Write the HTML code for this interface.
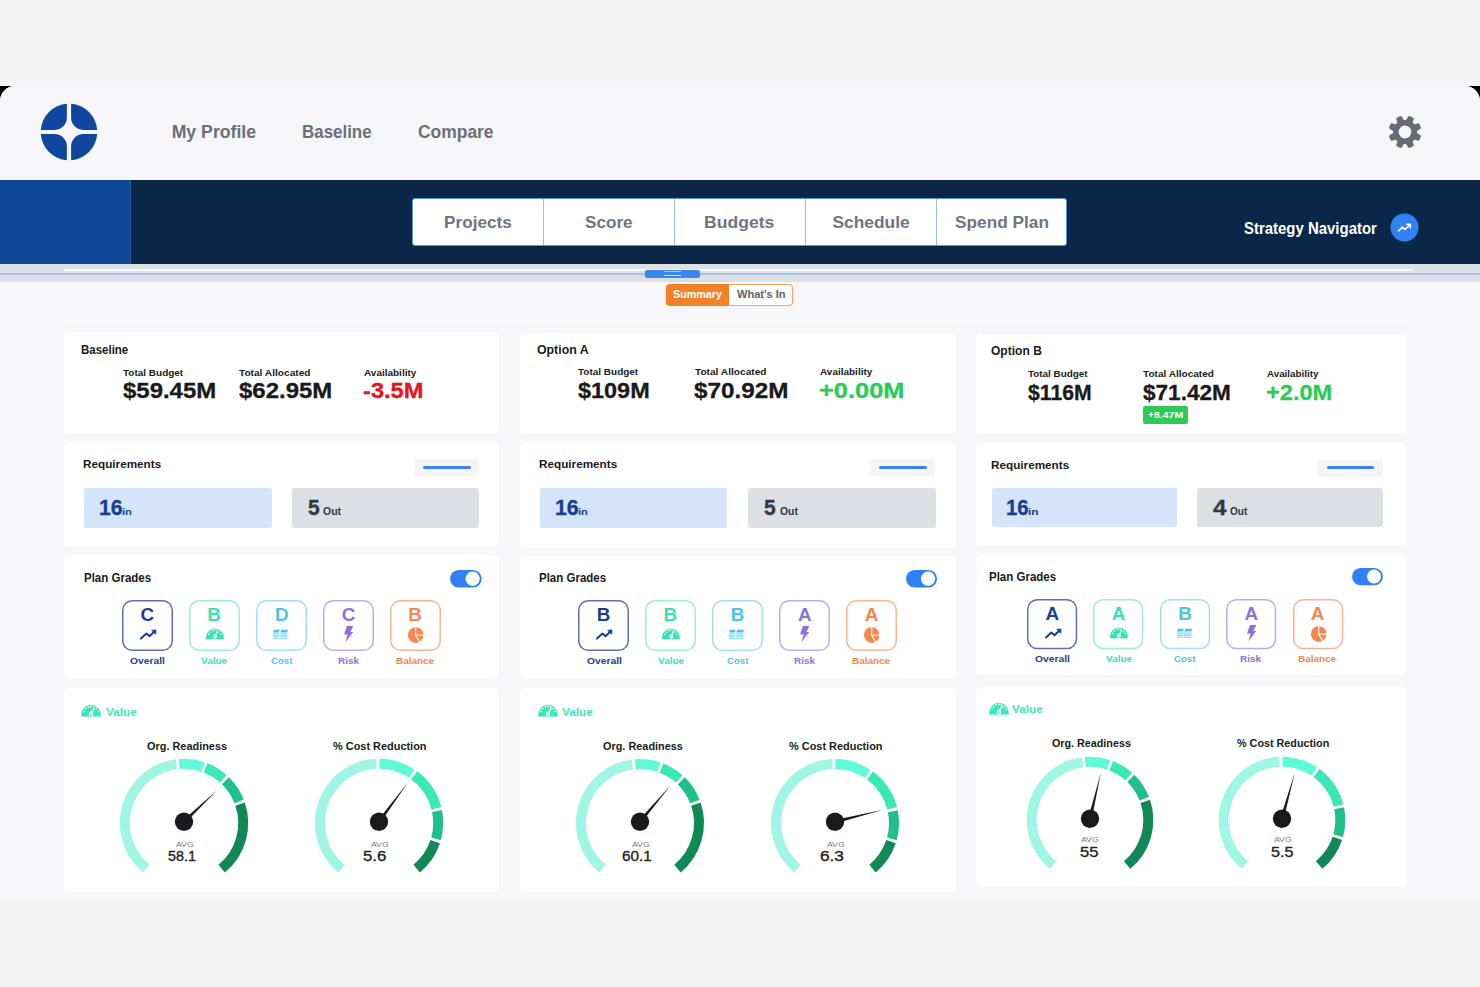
<!DOCTYPE html><html><head><meta charset="utf-8"><style>
html,body{margin:0;padding:0;}
body{width:1480px;height:987px;overflow:hidden;position:relative;background:#f4f4f4;font-family:"Liberation Sans",sans-serif;}
.t{position:absolute;white-space:nowrap;}
.r{position:absolute;display:block;}
</style></head><body>
<div class="r" style="left:0px;top:0px;width:1480px;height:86px;background:#f4f4f4;"></div>
<div class="r" style="left:0px;top:86px;width:1480px;height:24px;background:#000;"></div>
<div class="r" style="left:0px;top:86px;width:1480px;height:814px;background:#f7f7f9;border-radius:15px 15px 0 0;"></div>
<div class="r" style="left:0px;top:86px;width:1480px;height:94px;background:#f6f6f8;border-radius:15px 15px 0 0;"></div>
<svg class="r" style="left:36.75px;top:100px;" width="64" height="64" viewBox="0 0 64 64"><g transform="translate(32,32)"><path d="M2.1,-28.221977251780217 A28.3,28.3 0 0 1 28.221977251780217,-2.1 L14.299999999999999,-2.1 A12.2,12.2 0 0 1 2.1,-14.299999999999999 Z" transform="rotate(0)" fill="#0f479e"/><path d="M2.1,-28.221977251780217 A28.3,28.3 0 0 1 28.221977251780217,-2.1 L14.299999999999999,-2.1 A12.2,12.2 0 0 1 2.1,-14.299999999999999 Z" transform="rotate(90)" fill="#0f479e"/><path d="M2.1,-28.221977251780217 A28.3,28.3 0 0 1 28.221977251780217,-2.1 L14.299999999999999,-2.1 A12.2,12.2 0 0 1 2.1,-14.299999999999999 Z" transform="rotate(180)" fill="#0f479e"/><path d="M2.1,-28.221977251780217 A28.3,28.3 0 0 1 28.221977251780217,-2.1 L14.299999999999999,-2.1 A12.2,12.2 0 0 1 2.1,-14.299999999999999 Z" transform="rotate(270)" fill="#0f479e"/></g></svg>
<div class="t" id="t0" style="left:171.65px;top:124.43px;font-size:17.68px;line-height:17.68px;color:#6c6e78;font-weight:700;">My Profile</div>
<div class="t" id="t1" style="left:301.50px;top:124.43px;font-size:17.68px;line-height:17.68px;transform:scaleX(0.9577);transform-origin:0 0;color:#6c6e78;font-weight:700;">Baseline</div>
<div class="t" id="t2" style="left:418.10px;top:124.43px;font-size:17.68px;line-height:17.68px;transform:scaleX(0.9864);transform-origin:0 0;color:#6c6e78;font-weight:700;">Compare</div>
<svg class="r" style="left:1388px;top:115px;" width="34" height="34" viewBox="0 0 34 34"><g transform="translate(17,17)"><path d="M-3.4,-10 L-2.6,-15.4 Q-2.5,-16 -1.8,-16 L1.8,-16 Q2.5,-16 2.6,-15.4 L3.4,-10 Z" transform="rotate(22.5)" fill="#676a75" stroke="#676a75" stroke-width="0.8" stroke-linejoin="round"/><path d="M-3.4,-10 L-2.6,-15.4 Q-2.5,-16 -1.8,-16 L1.8,-16 Q2.5,-16 2.6,-15.4 L3.4,-10 Z" transform="rotate(67.5)" fill="#676a75" stroke="#676a75" stroke-width="0.8" stroke-linejoin="round"/><path d="M-3.4,-10 L-2.6,-15.4 Q-2.5,-16 -1.8,-16 L1.8,-16 Q2.5,-16 2.6,-15.4 L3.4,-10 Z" transform="rotate(112.5)" fill="#676a75" stroke="#676a75" stroke-width="0.8" stroke-linejoin="round"/><path d="M-3.4,-10 L-2.6,-15.4 Q-2.5,-16 -1.8,-16 L1.8,-16 Q2.5,-16 2.6,-15.4 L3.4,-10 Z" transform="rotate(157.5)" fill="#676a75" stroke="#676a75" stroke-width="0.8" stroke-linejoin="round"/><path d="M-3.4,-10 L-2.6,-15.4 Q-2.5,-16 -1.8,-16 L1.8,-16 Q2.5,-16 2.6,-15.4 L3.4,-10 Z" transform="rotate(202.5)" fill="#676a75" stroke="#676a75" stroke-width="0.8" stroke-linejoin="round"/><path d="M-3.4,-10 L-2.6,-15.4 Q-2.5,-16 -1.8,-16 L1.8,-16 Q2.5,-16 2.6,-15.4 L3.4,-10 Z" transform="rotate(247.5)" fill="#676a75" stroke="#676a75" stroke-width="0.8" stroke-linejoin="round"/><path d="M-3.4,-10 L-2.6,-15.4 Q-2.5,-16 -1.8,-16 L1.8,-16 Q2.5,-16 2.6,-15.4 L3.4,-10 Z" transform="rotate(292.5)" fill="#676a75" stroke="#676a75" stroke-width="0.8" stroke-linejoin="round"/><path d="M-3.4,-10 L-2.6,-15.4 Q-2.5,-16 -1.8,-16 L1.8,-16 Q2.5,-16 2.6,-15.4 L3.4,-10 Z" transform="rotate(337.5)" fill="#676a75" stroke="#676a75" stroke-width="0.8" stroke-linejoin="round"/><circle r="12" fill="#676a75"/><circle r="6.4" fill="#f6f6f8"/></g></svg>
<div class="r" style="left:0px;top:180px;width:1480px;height:84px;background:#0b2747;"></div>
<div class="r" style="left:0px;top:180px;width:130px;height:84px;background:#0e4596;"></div>
<div class="r" style="left:130px;top:180px;width:1px;height:84px;background:#2a5c9e;"></div>
<div class="r" style="left:412px;top:198px;width:655px;height:48px;background:#ffffff;border:1px solid #5d92e0;box-sizing:border-box;border-radius:3px;"></div>
<div class="r" style="left:543px;top:199px;width:1px;height:46px;background:#9cbcea;"></div>
<div class="r" style="left:674px;top:199px;width:1px;height:46px;background:#9cbcea;"></div>
<div class="r" style="left:805px;top:199px;width:1px;height:46px;background:#9cbcea;"></div>
<div class="r" style="left:936px;top:199px;width:1px;height:46px;background:#9cbcea;"></div>
<div class="t" id="t3" style="left:443.88px;top:214.28px;font-size:17.39px;line-height:17.39px;transform:scaleX(0.9883);transform-origin:0 0;color:#72747d;font-weight:700;">Projects</div>
<div class="t" id="t4" style="left:584.99px;top:214.28px;font-size:17.39px;line-height:17.39px;transform:scaleX(0.9848);transform-origin:0 0;color:#72747d;font-weight:700;">Score</div>
<div class="t" id="t5" style="left:704.36px;top:214.28px;font-size:17.39px;line-height:17.39px;transform:scaleX(1.0112);transform-origin:0 0;color:#72747d;font-weight:700;">Budgets</div>
<div class="t" id="t6" style="left:832.48px;top:214.28px;font-size:17.39px;line-height:17.39px;color:#72747d;font-weight:700;">Schedule</div>
<div class="t" id="t7" style="left:954.98px;top:214.28px;font-size:17.39px;line-height:17.39px;transform:scaleX(0.9932);transform-origin:0 0;color:#72747d;font-weight:700;">Spend Plan</div>
<div class="t" id="t8" style="left:1244.25px;top:220.71px;font-size:15.94px;line-height:15.94px;transform:scaleX(0.9377);transform-origin:0 0;color:#ffffff;font-weight:700;">Strategy Navigator</div>
<svg class="r" style="left:1390px;top:213px;" width="29" height="29" viewBox="0 0 29 29"><circle cx="14.5" cy="14.5" r="14" fill="#3282f5"/><polyline points="8.5,18 12.5,14 15,16.5 20,11.5" fill="none" stroke="#fff" stroke-width="1.6" stroke-linejoin="round" stroke-linecap="round"/><polyline points="16.8,11.2 20.3,11.2 20.3,14.7" fill="none" stroke="#fff" stroke-width="1.6" stroke-linejoin="round" stroke-linecap="round"/></svg>
<div class="r" style="left:0px;top:264px;width:1480px;height:18px;background:#dde0e4;"></div>
<div class="r" style="left:64px;top:269px;width:1349px;height:2px;background:#f7f8fa;"></div>
<div class="r" style="left:0px;top:273px;width:1480px;height:2px;background:#a9c0e4;"></div>
<div class="r" style="left:645px;top:270px;width:55px;height:8px;background:#3a87f4;border-radius:2px;"></div>
<div class="r" style="left:664px;top:271px;width:17px;height:1px;background:#a9ccfb;"></div>
<div class="r" style="left:664px;top:275px;width:17px;height:1px;background:#cfe2fd;"></div>
<div class="r" style="left:666px;top:284px;width:64px;height:22px;background:#f58126;border-radius:4px 0 0 4px;"></div>
<div class="r" style="left:729px;top:284px;width:64px;height:22px;background:#ffffff;border:1px solid #f5a46a;border-left:none;box-sizing:border-box;border-radius:0 4px 4px 0;"></div>
<div class="t" id="t9" style="left:673.18px;top:289.67px;font-size:10.43px;line-height:10.43px;transform:scaleX(1.0283);transform-origin:0 0;color:#ffffff;font-weight:700;">Summary</div>
<div class="t" id="t10" style="left:737.00px;top:289.67px;font-size:10.43px;line-height:10.43px;transform:scaleX(1.0587);transform-origin:0 0;color:#5d5f69;font-weight:700;">What's In</div>
<div class="r" style="left:58px;top:320px;width:1355px;height:2px;background:#fbfbfc;"></div>
<div class="r" style="left:64px;top:332px;width:435px;height:102px;background:#ffffff;border-radius:5px;"></div>
<div class="r" style="left:64px;top:442px;width:435px;height:105px;background:#ffffff;border-radius:5px;"></div>
<div class="r" style="left:64px;top:555px;width:435px;height:124px;background:#ffffff;border-radius:5px;"></div>
<div class="r" style="left:64px;top:688px;width:435px;height:204px;background:#ffffff;border-radius:5px;"></div>
<div class="r" style="left:520px;top:333px;width:436px;height:101px;background:#ffffff;border-radius:5px;"></div>
<div class="r" style="left:520px;top:442px;width:436px;height:106px;background:#ffffff;border-radius:5px;"></div>
<div class="r" style="left:520px;top:556px;width:436px;height:123px;background:#ffffff;border-radius:5px;"></div>
<div class="r" style="left:520px;top:688px;width:436px;height:204px;background:#ffffff;border-radius:5px;"></div>
<div class="r" style="left:976px;top:334px;width:430px;height:100px;background:#ffffff;border-radius:5px;"></div>
<div class="r" style="left:976px;top:443px;width:430px;height:103px;background:#ffffff;border-radius:5px;"></div>
<div class="r" style="left:976px;top:554px;width:430px;height:121px;background:#ffffff;border-radius:5px;"></div>
<div class="r" style="left:976px;top:687px;width:430px;height:200px;background:#ffffff;border-radius:5px;"></div>
<!--CONTENT-->
<div class="t" id="t11" style="left:80.95px;top:343.89px;font-size:12.17px;line-height:12.17px;transform:scaleX(0.9443);transform-origin:0 0;color:#1a1a1a;font-weight:700;">Baseline</div>
<div class="t" id="t12" style="left:122.90px;top:368.40px;font-size:9.57px;line-height:9.57px;transform:scaleX(1.0428);transform-origin:0 0;color:#1a1a1a;font-weight:700;">Total Budget</div>
<div class="t" id="t13" style="left:239.20px;top:368.40px;font-size:9.57px;line-height:9.57px;transform:scaleX(1.0589);transform-origin:0 0;color:#1a1a1a;font-weight:700;">Total Allocated</div>
<div class="t" id="t14" style="left:363.95px;top:368.40px;font-size:9.57px;line-height:9.57px;transform:scaleX(1.0434);transform-origin:0 0;color:#1a1a1a;font-weight:700;">Availability</div>
<div class="t" id="t15" style="left:122.64px;top:381.04px;font-size:21.45px;line-height:21.45px;transform:scaleX(1.1172);transform-origin:0 0;color:#1a1a1a;font-weight:700;-webkit-text-stroke:0.3px #1a1a1a;">$59.45M</div>
<div class="t" id="t16" style="left:238.94px;top:381.04px;font-size:21.45px;line-height:21.45px;transform:scaleX(1.1184);transform-origin:0 0;color:#1a1a1a;font-weight:700;-webkit-text-stroke:0.3px #1a1a1a;">$62.95M</div>
<div class="t" id="t17" style="left:363.25px;top:381.04px;font-size:21.45px;line-height:21.45px;transform:scaleX(1.1037);transform-origin:0 0;color:#e3141b;font-weight:700;-webkit-text-stroke:0.3px #e3141b;">-3.5M</div>
<div class="t" id="t18" style="left:83.34px;top:460.27px;font-size:10.43px;line-height:10.43px;transform:scaleX(1.1249);transform-origin:0 0;color:#1a1a1a;font-weight:700;">Requirements</div>
<div class="r" style="left:414.6px;top:459px;width:64.69999999999999px;height:17px;background:#f5f5f7;border-radius:3px;"></div>
<div class="r" style="left:423px;top:466.2px;width:47.80000000000001px;height:3.0px;background:#3b82f6;border-radius:2px;"></div>
<div class="r" style="left:84px;top:487.7px;width:188px;height:39.900000000000034px;background:#d3e4fb;border-radius:3px;"></div>
<div class="r" style="left:292px;top:487.7px;width:187.3px;height:39.900000000000034px;background:#dcdfe4;border-radius:3px;"></div>
<div class="t" id="t19" style="left:99.23px;top:498.24px;font-size:21.45px;line-height:21.45px;transform:scaleX(0.9876);transform-origin:0 0;color:#143f8e;font-weight:700;-webkit-text-stroke:0.3px #143f8e;">16</div>
<div class="t" id="t20" style="left:122.22px;top:507.25px;font-size:9.63px;line-height:9.63px;transform:scaleX(1.1614);transform-origin:0 0;color:#143f8e;font-weight:700;">in</div>
<div class="t" id="t21" style="left:308.17px;top:498.24px;font-size:21.45px;line-height:21.45px;transform:scaleX(0.9791);transform-origin:0 0;color:#333842;font-weight:700;-webkit-text-stroke:0.3px #333842;">5</div>
<div class="t" id="t22" style="left:323.28px;top:506.81px;font-size:10.14px;line-height:10.14px;transform:scaleX(1.0329);transform-origin:0 0;color:#333842;font-weight:700;">Out</div>
<div class="t" id="t23" style="left:83.55px;top:571.85px;font-size:12.46px;line-height:12.46px;transform:scaleX(0.9241);transform-origin:0 0;color:#1a1a1a;font-weight:700;">Plan Grades</div>
<svg class="r" style="left:449.5px;top:569.7px;" width="33" height="19" viewBox="0 0 33 19"><rect x="0" y="0" width="31.70" height="17.50" rx="8.75" fill="#3181f6"/><circle cx="22.65" cy="8.75" r="7.15" fill="#fff"/></svg>
<svg class="r" style="left:122px;top:600.2px;" width="51" height="51" viewBox="0 0 51 51"><rect x="0.75" y="0.75" width="49.50" height="49.50" rx="9.5" fill="#fff" stroke="#6070ad" stroke-width="1.5"/><polyline points="19,38.6 24.4,33.5 27.5,36.2 31.6,32.2" fill="none" stroke="#1f3e8a" stroke-width="2" stroke-linejoin="round" stroke-linecap="round"/><polygon points="34.1,29.9 29.6,30.2 33.8,34.4" fill="#1f3e8a" stroke="#1f3e8a" stroke-width="0.6" stroke-linejoin="round"/></svg>
<div class="t" id="t24" style="left:140.58px;top:606.45px;font-size:18.84px;line-height:18.84px;color:#1f3e8a;font-weight:700;">C</div>
<div class="t" id="t25" style="left:130.19px;top:657.12px;font-size:8.84px;line-height:8.84px;transform:scaleX(1.1639);transform-origin:0 0;color:#1f3e8a;font-weight:700;">Overall</div>
<svg class="r" style="left:188.8px;top:600.2px;" width="51" height="51" viewBox="0 0 51 51"><rect x="0.75" y="0.75" width="49.50" height="49.50" rx="9.5" fill="#fff" stroke="#9ceed6" stroke-width="1.5"/><path d="M17.10,39.20 L17.10,37.20 A8.80,8.80 0 0 1 34.70,37.20 L34.70,39.20 Z" fill="#35e4b2"/><circle cx="19.70" cy="34.34" r="0.79" fill="#ffffff" opacity="0.9"/><circle cx="21.23" cy="31.93" r="0.79" fill="#ffffff" opacity="0.9"/><circle cx="23.64" cy="30.40" r="0.79" fill="#ffffff" opacity="0.9"/><circle cx="25.90" cy="30.00" r="0.79" fill="#ffffff" opacity="0.9"/><circle cx="28.16" cy="30.40" r="0.79" fill="#ffffff" opacity="0.9"/><circle cx="30.57" cy="31.93" r="0.79" fill="#ffffff" opacity="0.9"/><circle cx="32.10" cy="34.34" r="0.79" fill="#ffffff" opacity="0.9"/><line x1="25.90" y1="36.60" x2="28.39" y2="31.92" stroke="#ffffff" stroke-width="1.41" stroke-linecap="round"/><circle cx="25.90" cy="36.60" r="1.58" fill="none" stroke="#ffffff" stroke-width="1.06"/></svg>
<div class="t" id="t26" style="left:207.33px;top:606.45px;font-size:18.84px;line-height:18.84px;color:#35e4b2;font-weight:700;">B</div>
<div class="t" id="t27" style="left:201.35px;top:657.12px;font-size:8.84px;line-height:8.84px;transform:scaleX(1.1355);transform-origin:0 0;color:#35e4b2;font-weight:700;">Value</div>
<svg class="r" style="left:256.4px;top:600.2px;" width="51" height="51" viewBox="0 0 51 51"><rect x="0.75" y="0.75" width="49.50" height="49.50" rx="9.5" fill="#fff" stroke="#a4dff2" stroke-width="1.5"/><path d="M16.900000000000002,33.2 L23.4,33.2 L23.1,34.800000000000004 L16.6,34.800000000000004 Z" fill="#4cc3e8" opacity="0.55"/><path d="M16.900000000000002,35.300000000000004 L23.4,35.300000000000004 L23.1,36.900000000000006 L16.6,36.900000000000006 Z" fill="#4cc3e8" opacity="0.55"/><path d="M16.900000000000002,37.400000000000006 L23.4,37.400000000000006 L23.1,39.00000000000001 L16.6,39.00000000000001 Z" fill="#4cc3e8" opacity="0.55"/><path d="M18.200000000000003,29.8 L24.0,29.8 L22.6,32.6 L16.8,32.6 Z" fill="#4cc3e8"/><path d="M24.2,33.2 L31.699999999999996,33.2 L31.4,34.800000000000004 L23.9,34.800000000000004 Z" fill="#4cc3e8" opacity="0.55"/><path d="M24.2,35.300000000000004 L31.699999999999996,35.300000000000004 L31.4,36.900000000000006 L23.9,36.900000000000006 Z" fill="#4cc3e8" opacity="0.55"/><path d="M24.2,37.400000000000006 L31.699999999999996,37.400000000000006 L31.4,39.00000000000001 L23.9,39.00000000000001 Z" fill="#4cc3e8" opacity="0.55"/><path d="M25.5,29.8 L32.3,29.8 L30.9,32.6 L24.099999999999998,32.6 Z" fill="#4cc3e8"/></svg>
<div class="t" id="t28" style="left:274.88px;top:606.45px;font-size:18.84px;line-height:18.84px;color:#4cc3e8;font-weight:700;">D</div>
<div class="t" id="t29" style="left:271.06px;top:657.12px;font-size:8.84px;line-height:8.84px;transform:scaleX(1.0894);transform-origin:0 0;color:#4cc3e8;font-weight:700;">Cost</div>
<svg class="r" style="left:323.1px;top:600.2px;" width="51" height="51" viewBox="0 0 51 51"><rect x="0.75" y="0.75" width="49.50" height="49.50" rx="9.5" fill="#fff" stroke="#bdaeeb" stroke-width="1.5"/><polygon points="23.9,25.9 30.3,25.9 27.4,32 30.2,32 22.3,42.4 24.7,34.6 21.1,34.6" fill="#8a72dc"/></svg>
<div class="t" id="t30" style="left:341.68px;top:606.45px;font-size:18.84px;line-height:18.84px;color:#8a72dc;font-weight:700;">C</div>
<div class="t" id="t31" style="left:337.80px;top:657.12px;font-size:8.84px;line-height:8.84px;transform:scaleX(1.1229);transform-origin:0 0;color:#8a72dc;font-weight:700;">Risk</div>
<svg class="r" style="left:389.8px;top:600.2px;" width="51" height="51" viewBox="0 0 51 51"><rect x="0.75" y="0.75" width="49.50" height="49.50" rx="9.5" fill="#fff" stroke="#f4b797" stroke-width="1.5"/><circle cx="25.7" cy="35.1" r="7.8" fill="#f4874c"/><line x1="25.7" y1="35.1" x2="25.7" y2="26.3" stroke="#fff" stroke-width="1.1"/><line x1="25.7" y1="35.1" x2="34.5" y2="35.1" stroke="#fff" stroke-width="1.1"/><line x1="25.7" y1="35.1" x2="30.10" y2="42.72" stroke="#fff" stroke-width="1.1"/></svg>
<div class="t" id="t32" style="left:408.33px;top:606.45px;font-size:18.84px;line-height:18.84px;color:#f4874c;font-weight:700;">B</div>
<div class="t" id="t33" style="left:396.05px;top:657.12px;font-size:8.84px;line-height:8.84px;transform:scaleX(1.1266);transform-origin:0 0;color:#f4874c;font-weight:700;">Balance</div>
<svg class="r" style="left:81px;top:696.8px;" width="21" height="20" viewBox="0 0 21 20"><path d="M0.30,19.50 L0.30,17.50 A9.70,9.70 0 0 1 19.70,17.50 L19.70,19.50 Z" fill="#36eab6"/><circle cx="2.95" cy="14.33" r="0.87" fill="#ffffff" opacity="0.9"/><circle cx="4.70" cy="11.60" r="0.87" fill="#ffffff" opacity="0.9"/><circle cx="7.43" cy="9.85" r="0.87" fill="#ffffff" opacity="0.9"/><circle cx="10.00" cy="9.40" r="0.87" fill="#ffffff" opacity="0.9"/><circle cx="12.57" cy="9.85" r="0.87" fill="#ffffff" opacity="0.9"/><circle cx="15.30" cy="11.60" r="0.87" fill="#ffffff" opacity="0.9"/><circle cx="17.05" cy="14.33" r="0.87" fill="#ffffff" opacity="0.9"/><line x1="10.00" y1="16.90" x2="12.91" y2="11.43" stroke="#ffffff" stroke-width="1.55" stroke-linecap="round"/><circle cx="10.00" cy="16.90" r="1.75" fill="none" stroke="#ffffff" stroke-width="1.16"/></svg>
<div class="t" id="t34" style="left:106.44px;top:707.09px;font-size:11.59px;line-height:11.59px;transform:scaleX(1.0135);transform-origin:0 0;color:#3ae9b7;font-weight:700;">Value</div>
<div class="t" id="t35" style="left:147.46px;top:741.09px;font-size:11.59px;line-height:11.59px;transform:scaleX(0.9427);transform-origin:0 0;color:#1a1a1a;font-weight:700;">Org. Readiness</div>
<div class="t" id="t36" style="left:333.33px;top:741.09px;font-size:11.59px;line-height:11.59px;transform:scaleX(0.9440);transform-origin:0 0;color:#1a1a1a;font-weight:700;">% Cost Reduction</div>
<svg class="r" style="left:104.2px;top:743px;" width="160" height="150" viewBox="0 0 160 150"><path d="M42.34,125.68 A59.2,59.2 0 0 1 72.38,21.29" fill="none" stroke="#9ff6e4" stroke-width="10"/><path d="M75.25,20.99 A59.2,59.2 0 0 1 98.88,23.89" fill="none" stroke="#5ffbd8" stroke-width="10"/><path d="M101.60,24.88 A59.2,59.2 0 0 1 119.30,35.73" fill="none" stroke="#3ae8b4" stroke-width="10"/><path d="M121.42,37.70 A59.2,59.2 0 0 1 135.12,58.40" fill="none" stroke="#1fc08c" stroke-width="10"/><path d="M136.11,61.12 A59.2,59.2 0 0 1 117.66,125.68" fill="none" stroke="#128758" stroke-width="10"/><polygon points="78.76,77.40 113.31,46.98 81.24,80.00" fill="#1a1a1c"/><circle cx="80" cy="78.7" r="9.2" fill="#1a1a1c"/></svg>
<div class="t" id="t37" style="left:175.70px;top:841.30px;font-size:7.68px;line-height:7.68px;transform:scaleX(1.1263);transform-origin:0 0;color:#7a7a7e;font-weight:400;">AVG</div>
<div class="t" id="t38" style="left:168.03px;top:849.03px;font-size:14.49px;line-height:14.49px;transform:scaleX(0.9905);transform-origin:0 0;color:#232325;font-weight:400;-webkit-text-stroke:0.35px #232325;">58.1</div>
<svg class="r" style="left:299.1px;top:743px;" width="160" height="150" viewBox="0 0 160 150"><path d="M42.34,125.68 A59.2,59.2 0 0 1 77.52,20.85" fill="none" stroke="#9ff6e4" stroke-width="10"/><path d="M80.41,20.80 A59.2,59.2 0 0 1 112.76,30.69" fill="none" stroke="#5ffbd8" stroke-width="10"/><path d="M115.13,32.35 A59.2,59.2 0 0 1 137.34,65.28" fill="none" stroke="#3ae8b4" stroke-width="10"/><path d="M137.99,68.10 A59.2,59.2 0 0 1 137.02,95.92" fill="none" stroke="#1fc08c" stroke-width="10"/><path d="M136.17,98.69 A59.2,59.2 0 0 1 117.66,125.68" fill="none" stroke="#128758" stroke-width="10"/><polygon points="78.55,77.63 109.01,39.21 81.45,79.77" fill="#1a1a1c"/><circle cx="80" cy="78.7" r="9.2" fill="#1a1a1c"/></svg>
<div class="t" id="t39" style="left:370.60px;top:841.30px;font-size:7.68px;line-height:7.68px;transform:scaleX(1.1263);transform-origin:0 0;color:#7a7a7e;font-weight:400;">AVG</div>
<div class="t" id="t40" style="left:362.93px;top:849.03px;font-size:14.49px;line-height:14.49px;transform:scaleX(1.1588);transform-origin:0 0;color:#232325;font-weight:400;-webkit-text-stroke:0.35px #232325;">5.6</div>
<div class="t" id="t41" style="left:536.51px;top:343.89px;font-size:12.17px;line-height:12.17px;transform:scaleX(1.0141);transform-origin:0 0;color:#1a1a1a;font-weight:700;">Option A</div>
<div class="t" id="t42" style="left:578.20px;top:367.20px;font-size:9.57px;line-height:9.57px;transform:scaleX(1.0428);transform-origin:0 0;color:#1a1a1a;font-weight:700;">Total Budget</div>
<div class="t" id="t43" style="left:694.70px;top:367.20px;font-size:9.57px;line-height:9.57px;transform:scaleX(1.0589);transform-origin:0 0;color:#1a1a1a;font-weight:700;">Total Allocated</div>
<div class="t" id="t44" style="left:820.05px;top:367.20px;font-size:9.57px;line-height:9.57px;transform:scaleX(1.0434);transform-origin:0 0;color:#1a1a1a;font-weight:700;">Availability</div>
<div class="t" id="t45" style="left:577.95px;top:381.14px;font-size:21.45px;line-height:21.45px;transform:scaleX(1.0938);transform-origin:0 0;color:#1a1a1a;font-weight:700;-webkit-text-stroke:0.3px #1a1a1a;">$109M</div>
<div class="t" id="t46" style="left:694.44px;top:381.14px;font-size:21.45px;line-height:21.45px;transform:scaleX(1.1307);transform-origin:0 0;color:#1a1a1a;font-weight:700;-webkit-text-stroke:0.3px #1a1a1a;">$70.92M</div>
<div class="t" id="t47" style="left:819.28px;top:381.14px;font-size:21.45px;line-height:21.45px;transform:scaleX(1.1860);transform-origin:0 0;color:#2dcb55;font-weight:700;-webkit-text-stroke:0.3px #2dcb55;">+0.00M</div>
<div class="t" id="t48" style="left:539.44px;top:460.27px;font-size:10.43px;line-height:10.43px;transform:scaleX(1.1249);transform-origin:0 0;color:#1a1a1a;font-weight:700;">Requirements</div>
<div class="r" style="left:869.8px;top:459px;width:65.70000000000005px;height:17px;background:#f5f5f7;border-radius:3px;"></div>
<div class="r" style="left:879px;top:466.2px;width:48px;height:3.0px;background:#3b82f6;border-radius:2px;"></div>
<div class="r" style="left:540.2px;top:487.7px;width:187.29999999999995px;height:39.900000000000034px;background:#d3e4fb;border-radius:3px;"></div>
<div class="r" style="left:747.5px;top:487.7px;width:188.0px;height:39.900000000000034px;background:#dcdfe4;border-radius:3px;"></div>
<div class="t" id="t49" style="left:554.72px;top:498.24px;font-size:21.45px;line-height:21.45px;transform:scaleX(0.9921);transform-origin:0 0;color:#143f8e;font-weight:700;-webkit-text-stroke:0.3px #143f8e;">16</div>
<div class="t" id="t50" style="left:577.83px;top:507.25px;font-size:9.63px;line-height:9.63px;transform:scaleX(1.1478);transform-origin:0 0;color:#143f8e;font-weight:700;">in</div>
<div class="t" id="t51" style="left:764.07px;top:498.24px;font-size:21.45px;line-height:21.45px;transform:scaleX(0.9791);transform-origin:0 0;color:#333842;font-weight:700;-webkit-text-stroke:0.3px #333842;">5</div>
<div class="t" id="t52" style="left:779.58px;top:506.81px;font-size:10.14px;line-height:10.14px;transform:scaleX(1.0270);transform-origin:0 0;color:#333842;font-weight:700;">Out</div>
<div class="t" id="t53" style="left:539.45px;top:571.85px;font-size:12.46px;line-height:12.46px;transform:scaleX(0.9241);transform-origin:0 0;color:#1a1a1a;font-weight:700;">Plan Grades</div>
<svg class="r" style="left:906px;top:569.7px;" width="33" height="19" viewBox="0 0 33 19"><rect x="0" y="0" width="31.10" height="17.50" rx="8.75" fill="#3181f6"/><circle cx="22.05" cy="8.75" r="7.15" fill="#fff"/></svg>
<svg class="r" style="left:578.3px;top:600.2px;" width="51" height="51" viewBox="0 0 51 51"><rect x="0.75" y="0.75" width="49.50" height="49.50" rx="9.5" fill="#fff" stroke="#6070ad" stroke-width="1.5"/><polyline points="19,38.6 24.4,33.5 27.5,36.2 31.6,32.2" fill="none" stroke="#1f3e8a" stroke-width="2" stroke-linejoin="round" stroke-linecap="round"/><polygon points="34.1,29.9 29.6,30.2 33.8,34.4" fill="#1f3e8a" stroke="#1f3e8a" stroke-width="0.6" stroke-linejoin="round"/></svg>
<div class="t" id="t54" style="left:596.83px;top:606.45px;font-size:18.84px;line-height:18.84px;color:#1f3e8a;font-weight:700;">B</div>
<div class="t" id="t55" style="left:587.49px;top:657.12px;font-size:8.84px;line-height:8.84px;transform:scaleX(1.1639);transform-origin:0 0;color:#1f3e8a;font-weight:700;">Overall</div>
<svg class="r" style="left:645px;top:600.2px;" width="51" height="51" viewBox="0 0 51 51"><rect x="0.75" y="0.75" width="49.50" height="49.50" rx="9.5" fill="#fff" stroke="#9ceed6" stroke-width="1.5"/><path d="M17.10,39.20 L17.10,37.20 A8.80,8.80 0 0 1 34.70,37.20 L34.70,39.20 Z" fill="#35e4b2"/><circle cx="19.70" cy="34.34" r="0.79" fill="#ffffff" opacity="0.9"/><circle cx="21.23" cy="31.93" r="0.79" fill="#ffffff" opacity="0.9"/><circle cx="23.64" cy="30.40" r="0.79" fill="#ffffff" opacity="0.9"/><circle cx="25.90" cy="30.00" r="0.79" fill="#ffffff" opacity="0.9"/><circle cx="28.16" cy="30.40" r="0.79" fill="#ffffff" opacity="0.9"/><circle cx="30.57" cy="31.93" r="0.79" fill="#ffffff" opacity="0.9"/><circle cx="32.10" cy="34.34" r="0.79" fill="#ffffff" opacity="0.9"/><line x1="25.90" y1="36.60" x2="28.39" y2="31.92" stroke="#ffffff" stroke-width="1.41" stroke-linecap="round"/><circle cx="25.90" cy="36.60" r="1.58" fill="none" stroke="#ffffff" stroke-width="1.06"/></svg>
<div class="t" id="t56" style="left:663.53px;top:606.45px;font-size:18.84px;line-height:18.84px;color:#35e4b2;font-weight:700;">B</div>
<div class="t" id="t57" style="left:657.55px;top:657.12px;font-size:8.84px;line-height:8.84px;transform:scaleX(1.1355);transform-origin:0 0;color:#35e4b2;font-weight:700;">Value</div>
<svg class="r" style="left:712.3px;top:600.2px;" width="51" height="51" viewBox="0 0 51 51"><rect x="0.75" y="0.75" width="49.50" height="49.50" rx="9.5" fill="#fff" stroke="#a4dff2" stroke-width="1.5"/><path d="M16.900000000000002,33.2 L23.4,33.2 L23.1,34.800000000000004 L16.6,34.800000000000004 Z" fill="#4cc3e8" opacity="0.55"/><path d="M16.900000000000002,35.300000000000004 L23.4,35.300000000000004 L23.1,36.900000000000006 L16.6,36.900000000000006 Z" fill="#4cc3e8" opacity="0.55"/><path d="M16.900000000000002,37.400000000000006 L23.4,37.400000000000006 L23.1,39.00000000000001 L16.6,39.00000000000001 Z" fill="#4cc3e8" opacity="0.55"/><path d="M18.200000000000003,29.8 L24.0,29.8 L22.6,32.6 L16.8,32.6 Z" fill="#4cc3e8"/><path d="M24.2,33.2 L31.699999999999996,33.2 L31.4,34.800000000000004 L23.9,34.800000000000004 Z" fill="#4cc3e8" opacity="0.55"/><path d="M24.2,35.300000000000004 L31.699999999999996,35.300000000000004 L31.4,36.900000000000006 L23.9,36.900000000000006 Z" fill="#4cc3e8" opacity="0.55"/><path d="M24.2,37.400000000000006 L31.699999999999996,37.400000000000006 L31.4,39.00000000000001 L23.9,39.00000000000001 Z" fill="#4cc3e8" opacity="0.55"/><path d="M25.5,29.8 L32.3,29.8 L30.9,32.6 L24.099999999999998,32.6 Z" fill="#4cc3e8"/></svg>
<div class="t" id="t58" style="left:730.83px;top:606.45px;font-size:18.84px;line-height:18.84px;color:#4cc3e8;font-weight:700;">B</div>
<div class="t" id="t59" style="left:726.96px;top:657.12px;font-size:8.84px;line-height:8.84px;transform:scaleX(1.0894);transform-origin:0 0;color:#4cc3e8;font-weight:700;">Cost</div>
<svg class="r" style="left:779.3px;top:600.2px;" width="51" height="51" viewBox="0 0 51 51"><rect x="0.75" y="0.75" width="49.50" height="49.50" rx="9.5" fill="#fff" stroke="#bdaeeb" stroke-width="1.5"/><polygon points="23.9,25.9 30.3,25.9 27.4,32 30.2,32 22.3,42.4 24.7,34.6 21.1,34.6" fill="#8a72dc"/></svg>
<div class="t" id="t60" style="left:798.02px;top:606.45px;font-size:18.84px;line-height:18.84px;color:#8a72dc;font-weight:700;">A</div>
<div class="t" id="t61" style="left:794.00px;top:657.12px;font-size:8.84px;line-height:8.84px;transform:scaleX(1.1229);transform-origin:0 0;color:#8a72dc;font-weight:700;">Risk</div>
<svg class="r" style="left:846px;top:600.2px;" width="51" height="51" viewBox="0 0 51 51"><rect x="0.75" y="0.75" width="49.50" height="49.50" rx="9.5" fill="#fff" stroke="#f4b797" stroke-width="1.5"/><circle cx="25.7" cy="35.1" r="7.8" fill="#f4874c"/><line x1="25.7" y1="35.1" x2="25.7" y2="26.3" stroke="#fff" stroke-width="1.1"/><line x1="25.7" y1="35.1" x2="34.5" y2="35.1" stroke="#fff" stroke-width="1.1"/><line x1="25.7" y1="35.1" x2="30.10" y2="42.72" stroke="#fff" stroke-width="1.1"/></svg>
<div class="t" id="t62" style="left:864.72px;top:606.45px;font-size:18.84px;line-height:18.84px;color:#f4874c;font-weight:700;">A</div>
<div class="t" id="t63" style="left:852.25px;top:657.12px;font-size:8.84px;line-height:8.84px;transform:scaleX(1.1266);transform-origin:0 0;color:#f4874c;font-weight:700;">Balance</div>
<svg class="r" style="left:538px;top:696.8px;" width="21" height="20" viewBox="0 0 21 20"><path d="M0.30,19.50 L0.30,17.50 A9.70,9.70 0 0 1 19.70,17.50 L19.70,19.50 Z" fill="#36eab6"/><circle cx="2.95" cy="14.33" r="0.87" fill="#ffffff" opacity="0.9"/><circle cx="4.70" cy="11.60" r="0.87" fill="#ffffff" opacity="0.9"/><circle cx="7.43" cy="9.85" r="0.87" fill="#ffffff" opacity="0.9"/><circle cx="10.00" cy="9.40" r="0.87" fill="#ffffff" opacity="0.9"/><circle cx="12.57" cy="9.85" r="0.87" fill="#ffffff" opacity="0.9"/><circle cx="15.30" cy="11.60" r="0.87" fill="#ffffff" opacity="0.9"/><circle cx="17.05" cy="14.33" r="0.87" fill="#ffffff" opacity="0.9"/><line x1="10.00" y1="16.90" x2="12.91" y2="11.43" stroke="#ffffff" stroke-width="1.55" stroke-linecap="round"/><circle cx="10.00" cy="16.90" r="1.75" fill="none" stroke="#ffffff" stroke-width="1.16"/></svg>
<div class="t" id="t64" style="left:561.74px;top:707.09px;font-size:11.59px;line-height:11.59px;transform:scaleX(1.0135);transform-origin:0 0;color:#3ae9b7;font-weight:700;">Value</div>
<div class="t" id="t65" style="left:602.56px;top:741.09px;font-size:11.59px;line-height:11.59px;transform:scaleX(0.9404);transform-origin:0 0;color:#1a1a1a;font-weight:700;">Org. Readiness</div>
<div class="t" id="t66" style="left:789.23px;top:741.09px;font-size:11.59px;line-height:11.59px;transform:scaleX(0.9440);transform-origin:0 0;color:#1a1a1a;font-weight:700;">% Cost Reduction</div>
<svg class="r" style="left:560.2px;top:743px;" width="160" height="150" viewBox="0 0 160 150"><path d="M42.47,125.53 A59.0,59.0 0 0 1 72.40,21.49" fill="none" stroke="#9ff6e4" stroke-width="10"/><path d="M75.27,21.19 A59.0,59.0 0 0 1 98.82,24.08" fill="none" stroke="#5ffbd8" stroke-width="10"/><path d="M101.53,25.07 A59.0,59.0 0 0 1 119.17,35.88" fill="none" stroke="#3ae8b4" stroke-width="10"/><path d="M121.28,37.85 A59.0,59.0 0 0 1 134.93,58.47" fill="none" stroke="#1fc08c" stroke-width="10"/><path d="M135.92,61.18 A59.0,59.0 0 0 1 117.53,125.53" fill="none" stroke="#128758" stroke-width="10"/><polygon points="78.62,77.54 110.85,41.93 81.38,79.86" fill="#1a1a1c"/><circle cx="80" cy="78.7" r="9.2" fill="#1a1a1c"/></svg>
<div class="t" id="t67" style="left:631.70px;top:841.30px;font-size:7.68px;line-height:7.68px;transform:scaleX(1.1263);transform-origin:0 0;color:#7a7a7e;font-weight:400;">AVG</div>
<div class="t" id="t68" style="left:621.54px;top:849.03px;font-size:14.49px;line-height:14.49px;transform:scaleX(1.0555);transform-origin:0 0;color:#232325;font-weight:400;-webkit-text-stroke:0.35px #232325;">60.1</div>
<svg class="r" style="left:755.1px;top:743px;" width="160" height="150" viewBox="0 0 160 150"><path d="M42.47,125.53 A59.0,59.0 0 0 1 77.53,21.05" fill="none" stroke="#9ff6e4" stroke-width="10"/><path d="M80.41,21.00 A59.0,59.0 0 0 1 112.65,30.86" fill="none" stroke="#5ffbd8" stroke-width="10"/><path d="M115.01,32.51 A59.0,59.0 0 0 1 137.15,65.33" fill="none" stroke="#3ae8b4" stroke-width="10"/><path d="M137.79,68.14 A59.0,59.0 0 0 1 136.83,95.87" fill="none" stroke="#1fc08c" stroke-width="10"/><path d="M135.98,98.62 A59.0,59.0 0 0 1 117.53,125.53" fill="none" stroke="#128758" stroke-width="10"/><polygon points="79.56,76.95 128.03,66.72 80.44,80.45" fill="#1a1a1c"/><circle cx="80" cy="78.7" r="9.2" fill="#1a1a1c"/></svg>
<div class="t" id="t69" style="left:826.60px;top:841.30px;font-size:7.68px;line-height:7.68px;transform:scaleX(1.1263);transform-origin:0 0;color:#7a7a7e;font-weight:400;">AVG</div>
<div class="t" id="t70" style="left:820.34px;top:849.03px;font-size:14.49px;line-height:14.49px;transform:scaleX(1.1889);transform-origin:0 0;color:#232325;font-weight:400;-webkit-text-stroke:0.35px #232325;">6.3</div>
<div class="t" id="t71" style="left:990.62px;top:345.09px;font-size:12.17px;line-height:12.17px;transform:scaleX(0.9913);transform-origin:0 0;color:#1a1a1a;font-weight:700;">Option B</div>
<div class="t" id="t72" style="left:1028.20px;top:368.60px;font-size:9.57px;line-height:9.57px;transform:scaleX(1.0324);transform-origin:0 0;color:#1a1a1a;font-weight:700;">Total Budget</div>
<div class="t" id="t73" style="left:1143.10px;top:368.60px;font-size:9.57px;line-height:9.57px;transform:scaleX(1.0514);transform-origin:0 0;color:#1a1a1a;font-weight:700;">Total Allocated</div>
<div class="t" id="t74" style="left:1266.85px;top:368.60px;font-size:9.57px;line-height:9.57px;transform:scaleX(1.0254);transform-origin:0 0;color:#1a1a1a;font-weight:700;">Availability</div>
<div class="t" id="t75" style="left:1027.98px;top:382.74px;font-size:21.45px;line-height:21.45px;transform:scaleX(0.9883);transform-origin:0 0;color:#1a1a1a;font-weight:700;-webkit-text-stroke:0.3px #1a1a1a;">$116M</div>
<div class="t" id="t76" style="left:1142.86px;top:382.74px;font-size:21.45px;line-height:21.45px;transform:scaleX(1.0536);transform-origin:0 0;color:#1a1a1a;font-weight:700;-webkit-text-stroke:0.3px #1a1a1a;">$71.42M</div>
<div class="t" id="t77" style="left:1266.15px;top:382.74px;font-size:21.45px;line-height:21.45px;transform:scaleX(1.1017);transform-origin:0 0;color:#2dcb55;font-weight:700;-webkit-text-stroke:0.3px #2dcb55;">+2.0M</div>
<div class="r" style="left:1143px;top:406px;width:45px;height:18px;background:#2dcb55;border-radius:2px;"></div>
<div class="t" id="t78" style="left:1148.08px;top:411.18px;font-size:8.41px;line-height:8.41px;transform:scaleX(1.2427);transform-origin:0 0;color:#ffffff;font-weight:700;">+8.47M</div>
<div class="t" id="t79" style="left:991.04px;top:460.97px;font-size:10.43px;line-height:10.43px;transform:scaleX(1.1249);transform-origin:0 0;color:#1a1a1a;font-weight:700;">Requirements</div>
<div class="r" style="left:1317.3px;top:459.5px;width:65.70000000000005px;height:17.0px;background:#f5f5f7;border-radius:3px;"></div>
<div class="r" style="left:1326.8px;top:466.4px;width:47.600000000000136px;height:3.0px;background:#3b82f6;border-radius:2px;"></div>
<div class="r" style="left:991.8px;top:487.8px;width:185.70000000000005px;height:39.69999999999999px;background:#d3e4fb;border-radius:3px;"></div>
<div class="r" style="left:1196.9px;top:487.8px;width:186.0999999999999px;height:39.69999999999999px;background:#dcdfe4;border-radius:3px;"></div>
<div class="t" id="t80" style="left:1006.38px;top:498.24px;font-size:21.45px;line-height:21.45px;transform:scaleX(0.9508);transform-origin:0 0;color:#143f8e;font-weight:700;-webkit-text-stroke:0.3px #143f8e;">16</div>
<div class="t" id="t81" style="left:1028.17px;top:507.25px;font-size:9.63px;line-height:9.63px;transform:scaleX(1.2298);transform-origin:0 0;color:#143f8e;font-weight:700;">in</div>
<div class="t" id="t82" style="left:1212.74px;top:498.24px;font-size:21.45px;line-height:21.45px;transform:scaleX(1.1329);transform-origin:0 0;color:#333842;font-weight:700;-webkit-text-stroke:0.3px #333842;">4</div>
<div class="t" id="t83" style="left:1230.20px;top:506.81px;font-size:10.14px;line-height:10.14px;transform:scaleX(0.9916);transform-origin:0 0;color:#333842;font-weight:700;">Out</div>
<div class="t" id="t84" style="left:988.75px;top:570.55px;font-size:12.46px;line-height:12.46px;transform:scaleX(0.9241);transform-origin:0 0;color:#1a1a1a;font-weight:700;">Plan Grades</div>
<svg class="r" style="left:1351.5px;top:568.4px;" width="32" height="19" viewBox="0 0 32 19"><rect x="0" y="0" width="30.90" height="17.20" rx="8.60" fill="#3181f6"/><circle cx="22.00" cy="8.60" r="7.00" fill="#fff"/></svg>
<svg class="r" style="left:1027.3px;top:598.6px;" width="51" height="51" viewBox="0 0 51 51"><rect x="0.75" y="0.75" width="48.70" height="48.70" rx="9.5" fill="#fff" stroke="#6070ad" stroke-width="1.5"/><polyline points="19,38.6 24.4,33.5 27.5,36.2 31.6,32.2" fill="none" stroke="#1f3e8a" stroke-width="2" stroke-linejoin="round" stroke-linecap="round"/><polygon points="34.1,29.9 29.6,30.2 33.8,34.4" fill="#1f3e8a" stroke="#1f3e8a" stroke-width="0.6" stroke-linejoin="round"/></svg>
<div class="t" id="t85" style="left:1045.62px;top:604.85px;font-size:18.84px;line-height:18.84px;color:#1f3e8a;font-weight:700;">A</div>
<div class="t" id="t86" style="left:1035.09px;top:655.32px;font-size:8.84px;line-height:8.84px;transform:scaleX(1.1639);transform-origin:0 0;color:#1f3e8a;font-weight:700;">Overall</div>
<svg class="r" style="left:1093.4px;top:598.6px;" width="51" height="51" viewBox="0 0 51 51"><rect x="0.75" y="0.75" width="48.70" height="48.70" rx="9.5" fill="#fff" stroke="#9ceed6" stroke-width="1.5"/><path d="M17.10,39.20 L17.10,37.20 A8.80,8.80 0 0 1 34.70,37.20 L34.70,39.20 Z" fill="#35e4b2"/><circle cx="19.70" cy="34.34" r="0.79" fill="#ffffff" opacity="0.9"/><circle cx="21.23" cy="31.93" r="0.79" fill="#ffffff" opacity="0.9"/><circle cx="23.64" cy="30.40" r="0.79" fill="#ffffff" opacity="0.9"/><circle cx="25.90" cy="30.00" r="0.79" fill="#ffffff" opacity="0.9"/><circle cx="28.16" cy="30.40" r="0.79" fill="#ffffff" opacity="0.9"/><circle cx="30.57" cy="31.93" r="0.79" fill="#ffffff" opacity="0.9"/><circle cx="32.10" cy="34.34" r="0.79" fill="#ffffff" opacity="0.9"/><line x1="25.90" y1="36.60" x2="28.39" y2="31.92" stroke="#ffffff" stroke-width="1.41" stroke-linecap="round"/><circle cx="25.90" cy="36.60" r="1.58" fill="none" stroke="#ffffff" stroke-width="1.06"/></svg>
<div class="t" id="t87" style="left:1111.72px;top:604.85px;font-size:18.84px;line-height:18.84px;color:#35e4b2;font-weight:700;">A</div>
<div class="t" id="t88" style="left:1105.55px;top:655.32px;font-size:8.84px;line-height:8.84px;transform:scaleX(1.1355);transform-origin:0 0;color:#35e4b2;font-weight:700;">Value</div>
<svg class="r" style="left:1160px;top:598.6px;" width="51" height="51" viewBox="0 0 51 51"><rect x="0.75" y="0.75" width="48.70" height="48.70" rx="9.5" fill="#fff" stroke="#a4dff2" stroke-width="1.5"/><path d="M16.900000000000002,33.2 L23.4,33.2 L23.1,34.800000000000004 L16.6,34.800000000000004 Z" fill="#4cc3e8" opacity="0.55"/><path d="M16.900000000000002,35.300000000000004 L23.4,35.300000000000004 L23.1,36.900000000000006 L16.6,36.900000000000006 Z" fill="#4cc3e8" opacity="0.55"/><path d="M16.900000000000002,37.400000000000006 L23.4,37.400000000000006 L23.1,39.00000000000001 L16.6,39.00000000000001 Z" fill="#4cc3e8" opacity="0.55"/><path d="M18.200000000000003,29.8 L24.0,29.8 L22.6,32.6 L16.8,32.6 Z" fill="#4cc3e8"/><path d="M24.2,33.2 L31.699999999999996,33.2 L31.4,34.800000000000004 L23.9,34.800000000000004 Z" fill="#4cc3e8" opacity="0.55"/><path d="M24.2,35.300000000000004 L31.699999999999996,35.300000000000004 L31.4,36.900000000000006 L23.9,36.900000000000006 Z" fill="#4cc3e8" opacity="0.55"/><path d="M24.2,37.400000000000006 L31.699999999999996,37.400000000000006 L31.4,39.00000000000001 L23.9,39.00000000000001 Z" fill="#4cc3e8" opacity="0.55"/><path d="M25.5,29.8 L32.3,29.8 L30.9,32.6 L24.099999999999998,32.6 Z" fill="#4cc3e8"/></svg>
<div class="t" id="t89" style="left:1178.13px;top:604.85px;font-size:18.84px;line-height:18.84px;color:#4cc3e8;font-weight:700;">B</div>
<div class="t" id="t90" style="left:1174.26px;top:655.32px;font-size:8.84px;line-height:8.84px;transform:scaleX(1.0894);transform-origin:0 0;color:#4cc3e8;font-weight:700;">Cost</div>
<svg class="r" style="left:1226.1px;top:598.6px;" width="51" height="51" viewBox="0 0 51 51"><rect x="0.75" y="0.75" width="48.70" height="48.70" rx="9.5" fill="#fff" stroke="#bdaeeb" stroke-width="1.5"/><polygon points="23.9,25.9 30.3,25.9 27.4,32 30.2,32 22.3,42.4 24.7,34.6 21.1,34.6" fill="#8a72dc"/></svg>
<div class="t" id="t91" style="left:1244.42px;top:604.85px;font-size:18.84px;line-height:18.84px;color:#8a72dc;font-weight:700;">A</div>
<div class="t" id="t92" style="left:1240.40px;top:655.32px;font-size:8.84px;line-height:8.84px;transform:scaleX(1.1229);transform-origin:0 0;color:#8a72dc;font-weight:700;">Risk</div>
<svg class="r" style="left:1292.5px;top:598.6px;" width="51" height="51" viewBox="0 0 51 51"><rect x="0.75" y="0.75" width="48.70" height="48.70" rx="9.5" fill="#fff" stroke="#f4b797" stroke-width="1.5"/><circle cx="25.7" cy="35.1" r="7.8" fill="#f4874c"/><line x1="25.7" y1="35.1" x2="25.7" y2="26.3" stroke="#fff" stroke-width="1.1"/><line x1="25.7" y1="35.1" x2="34.5" y2="35.1" stroke="#fff" stroke-width="1.1"/><line x1="25.7" y1="35.1" x2="30.10" y2="42.72" stroke="#fff" stroke-width="1.1"/></svg>
<div class="t" id="t93" style="left:1310.82px;top:604.85px;font-size:18.84px;line-height:18.84px;color:#f4874c;font-weight:700;">A</div>
<div class="t" id="t94" style="left:1298.35px;top:655.32px;font-size:8.84px;line-height:8.84px;transform:scaleX(1.1266);transform-origin:0 0;color:#f4874c;font-weight:700;">Balance</div>
<svg class="r" style="left:988.6px;top:695.2px;" width="21" height="20" viewBox="0 0 21 20"><path d="M0.30,19.50 L0.30,17.50 A9.70,9.70 0 0 1 19.70,17.50 L19.70,19.50 Z" fill="#36eab6"/><circle cx="2.95" cy="14.33" r="0.87" fill="#ffffff" opacity="0.9"/><circle cx="4.70" cy="11.60" r="0.87" fill="#ffffff" opacity="0.9"/><circle cx="7.43" cy="9.85" r="0.87" fill="#ffffff" opacity="0.9"/><circle cx="10.00" cy="9.40" r="0.87" fill="#ffffff" opacity="0.9"/><circle cx="12.57" cy="9.85" r="0.87" fill="#ffffff" opacity="0.9"/><circle cx="15.30" cy="11.60" r="0.87" fill="#ffffff" opacity="0.9"/><circle cx="17.05" cy="14.33" r="0.87" fill="#ffffff" opacity="0.9"/><line x1="10.00" y1="16.90" x2="12.91" y2="11.43" stroke="#ffffff" stroke-width="1.55" stroke-linecap="round"/><circle cx="10.00" cy="16.90" r="1.75" fill="none" stroke="#ffffff" stroke-width="1.16"/></svg>
<div class="t" id="t95" style="left:1012.34px;top:704.49px;font-size:11.59px;line-height:11.59px;transform:scaleX(1.0135);transform-origin:0 0;color:#3ae9b7;font-weight:700;">Value</div>
<div class="t" id="t96" style="left:1052.27px;top:737.89px;font-size:11.59px;line-height:11.59px;transform:scaleX(0.9285);transform-origin:0 0;color:#1a1a1a;font-weight:700;">Org. Readiness</div>
<div class="t" id="t97" style="left:1236.63px;top:737.89px;font-size:11.59px;line-height:11.59px;transform:scaleX(0.9317);transform-origin:0 0;color:#1a1a1a;font-weight:700;">% Cost Reduction</div>
<svg class="r" style="left:1009.5px;top:739.5px;" width="160" height="150" viewBox="0 0 160 150"><path d="M42.92,124.99 A58.3,58.3 0 0 1 72.49,22.19" fill="none" stroke="#9ff6e4" stroke-width="10"/><path d="M75.32,21.89 A58.3,58.3 0 0 1 98.60,24.75" fill="none" stroke="#5ffbd8" stroke-width="10"/><path d="M101.27,25.72 A58.3,58.3 0 0 1 118.71,36.40" fill="none" stroke="#3ae8b4" stroke-width="10"/><path d="M120.79,38.35 A58.3,58.3 0 0 1 134.28,58.73" fill="none" stroke="#1fc08c" stroke-width="10"/><path d="M135.25,61.40 A58.3,58.3 0 0 1 117.08,124.99" fill="none" stroke="#128758" stroke-width="10"/><polygon points="78.25,78.29 91.04,31.99 81.75,79.11" fill="#1a1a1c"/><circle cx="80" cy="78.7" r="9.2" fill="#1a1a1c"/></svg>
<div class="t" id="t98" style="left:1081.00px;top:836.00px;font-size:7.68px;line-height:7.68px;transform:scaleX(1.1263);transform-origin:0 0;color:#7a7a7e;font-weight:400;">AVG</div>
<div class="t" id="t99" style="left:1079.54px;top:844.73px;font-size:14.49px;line-height:14.49px;transform:scaleX(1.1455);transform-origin:0 0;color:#232325;font-weight:400;-webkit-text-stroke:0.35px #232325;">55</div>
<svg class="r" style="left:1202px;top:739.5px;" width="160" height="150" viewBox="0 0 160 150"><path d="M42.92,124.99 A58.3,58.3 0 0 1 77.56,21.75" fill="none" stroke="#9ff6e4" stroke-width="10"/><path d="M80.41,21.70 A58.3,58.3 0 0 1 112.26,31.44" fill="none" stroke="#5ffbd8" stroke-width="10"/><path d="M114.60,33.07 A58.3,58.3 0 0 1 136.47,65.50" fill="none" stroke="#3ae8b4" stroke-width="10"/><path d="M137.11,68.28 A58.3,58.3 0 0 1 136.15,95.68" fill="none" stroke="#1fc08c" stroke-width="10"/><path d="M135.32,98.40 A58.3,58.3 0 0 1 117.08,124.99" fill="none" stroke="#128758" stroke-width="10"/><polygon points="78.27,78.22 92.83,32.45 81.73,79.18" fill="#1a1a1c"/><circle cx="80" cy="78.7" r="9.2" fill="#1a1a1c"/></svg>
<div class="t" id="t100" style="left:1273.50px;top:836.00px;font-size:7.68px;line-height:7.68px;transform:scaleX(1.1263);transform-origin:0 0;color:#7a7a7e;font-weight:400;">AVG</div>
<div class="t" id="t101" style="left:1270.56px;top:844.73px;font-size:14.49px;line-height:14.49px;transform:scaleX(1.1114);transform-origin:0 0;color:#232325;font-weight:400;-webkit-text-stroke:0.35px #232325;">5.5</div>
</body></html>
